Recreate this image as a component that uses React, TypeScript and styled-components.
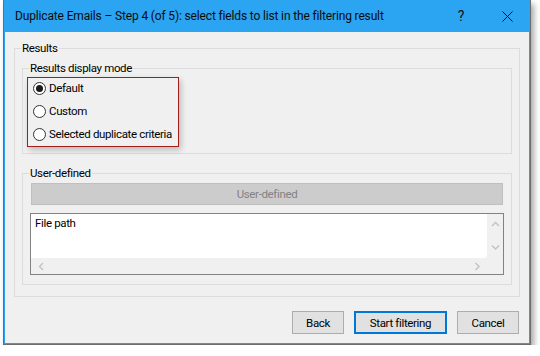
import styled, { createGlobalStyle } from "styled-components";

const modes = ["Default", "Custom", "Selected duplicate criteria"];

const Chevron = ({ dir }: { dir: "up" | "down" | "left" | "right" }) => {
    const paths: any = {
        up: "M1 5 L4.5 1.5 L8 5",
        down: "M1 1.5 L4.5 5 L8 1.5",
        left: "M5 1 L1.5 4.5 L5 8",
        right: "M1.5 1 L5 4.5 L1.5 8",
    };
    const vertical = dir === "up" || dir === "down";
    return (
        <svg width={vertical ? 9 : 7} height={vertical ? 7 : 9} viewBox={vertical ? "0 0 9 7" : "0 0 7 9"}>
            <path d={paths[dir]} fill="none" stroke="#c2c2c2" strokeWidth="1.4" />
        </svg>
    );
};

export default function App() {
    const selected = 0;

    return (
        <>
            <GlobalStyle />
            <Window>
                <TitleBar>
                    <TitleText>Duplicate Emails – Step 4 (of 5): select fields to list in the filtering result</TitleText>
                    <CaptionButton>?</CaptionButton>
                    <CaptionButton>
                        <svg width="11" height="11" viewBox="0 0 11 11">
                            <path d="M0.5 0.5 L10.5 10.5 M10.5 0.5 L0.5 10.5" stroke="#111" strokeWidth="1" />
                        </svg>
                    </CaptionButton>
                </TitleBar>
                <Content>
                    <Group $top={16} $side={9}>
                        <Caption $indent={6}>Results</Caption>
                        <GroupBody $pad="12px 7px 11px 7px">
                            <Group>
                                <Caption $indent={6}>Results display mode</Caption>
                                <GroupBody $pad="1px 4px 6px 4px">
                                    <Highlight>
                                        {modes.map((m, i) => (
                                            <RadioRow key={m}>
                                                <RadioDot $checked={i === selected} />
                                                <span>{m}</span>
                                            </RadioRow>
                                        ))}
                                    </Highlight>
                                </GroupBody>
                            </Group>
                            <Group $top={19}>
                                <Caption $indent={6}>User-defined</Caption>
                                <GroupBody $pad="2px 7px 9px 7px">
                                    <WideButton>User-defined</WideButton>
                                    <ListBox>
                                        <ListArea>File path</ListArea>
                                        <VScroll>
                                            <Chevron dir="up" />
                                            <Chevron dir="down" />
                                        </VScroll>
                                        <HScroll>
                                            <Chevron dir="left" />
                                            <Chevron dir="right" />
                                        </HScroll>
                                        <Corner />
                                    </ListBox>
                                </GroupBody>
                            </Group>
                        </GroupBody>
                    </Group>
                    <Footer>
                        <PushButton $w={52}>Back</PushButton>
                        <PushButton $w={93} $default>Start filtering</PushButton>
                        <PushButton $w={62}>Cancel</PushButton>
                    </Footer>
                </Content>
            </Window>
        </>
    );
}

const GlobalStyle = createGlobalStyle`
    body {
        margin: 0;
        background: #ffffff;
        font-family: Roboto, "Noto Sans", sans-serif;
        font-size: 11.5px;
        letter-spacing: -0.35px;
        color: #000;
    }
`

const Window = styled.div`
    margin-left: 3px;
    width: 528px;
    height: 345px;
    box-sizing: border-box;
    border: 1px solid #6d6d6d;
    border-top: none;
    background-color: #2aa1ec;
    padding: 0 1px 1px 1px;
    display: flex;
    flex-direction: column;
    box-shadow: 3px 4px 6px rgba(0, 0, 0, 0.35);
`

const TitleBar = styled.div`
    height: 32px;
    display: flex;
    align-items: center;
    background-color: #2ba4f1;
    margin: 0 -1px;
    padding-left: 11px;
`

const TitleText = styled.div`
    flex: 1;
    font-size: 12px;
    letter-spacing: -0.15px;
    color: #0b0b0b;
    white-space: nowrap;
`

const CaptionButton = styled.div`
    width: 46px;
    height: 32px;
    flex-shrink: 0;
    display: flex;
    align-items: center;
    justify-content: center;
    font-size: 14px;
    color: #111;
`

const Content = styled.div`
    flex: 1;
    background-color: #f0f0f0;
    display: flex;
    flex-direction: column;
`

const Group = styled.div<{ $top?: number; $side?: number }>`
    margin: ${(p) => p.$top || 0}px ${(p) => p.$side || 0}px 0 ${(p) => p.$side || 0}px;
    border: 1px solid #dcdcdc;
    display: flex;
    flex-direction: column;
`

const Caption = styled.div<{ $indent: number }>`
    align-self: flex-start;
    margin: -9px 0 0 ${(p) => p.$indent}px;
    padding: 0 1px;
    line-height: 16px;
    background-color: #f0f0f0;
`

const GroupBody = styled.div<{ $pad: string }>`
    padding: ${(p) => p.$pad};
    display: flex;
    flex-direction: column;
`

const Highlight = styled.div`
    width: 152px;
    height: 70px;
    box-sizing: border-box;
    border: 1px solid #a51c1c;
    box-shadow: 2px 3px 6px rgba(0, 0, 0, 0.22);
    display: flex;
    flex-direction: column;
    gap: 3px;
`

const RadioRow = styled.div`
    height: 20px;
    display: flex;
    align-items: center;
    gap: 3px;
    padding-left: 5px;
    white-space: nowrap;
`

const RadioDot = styled.div<{ $checked: boolean }>`
    width: 13px;
    height: 13px;
    flex-shrink: 0;
    box-sizing: border-box;
    border-radius: 50%;
    border: 1px solid #333;
    background-color: #fff;
    display: flex;
    align-items: center;
    justify-content: center;
    &::after {
        content: "";
        display: ${(p) => (p.$checked ? "block" : "none")};
        width: 7px;
        height: 7px;
        border-radius: 50%;
        background-color: #1a1a1a;
    }
`

const WideButton = styled.div`
    margin: 0 1px;
    height: 22px;
    box-sizing: border-box;
    background-color: #cccccc;
    border: 1px solid #bfbfbf;
    color: #838383;
    display: flex;
    align-items: center;
    justify-content: center;
`

const ListBox = styled.div`
    margin-top: 8px;
    height: 62px;
    box-sizing: border-box;
    border: 1px solid #828282;
    background-color: #f0f0f0;
    display: grid;
    grid-template-columns: 1fr 16px;
    grid-template-rows: 1fr 16px;
`

const ListArea = styled.div`
    background-color: #ffffff;
    border-bottom-right-radius: 3px;
    padding: 2px 4px;
`

const VScroll = styled.div`
    display: flex;
    flex-direction: column;
    align-items: center;
    justify-content: space-between;
    padding: 7px 0 7px;
`

const HScroll = styled.div`
    display: flex;
    align-items: center;
    justify-content: space-between;
    padding: 0 6px 0 7px;
`

const Corner = styled.div``

const Footer = styled.div`
    display: flex;
    justify-content: flex-end;
    gap: 10px;
    padding: 14px 10px 0 0;
`

const PushButton = styled.div<{ $w: number; $default?: boolean }>`
    width: ${(p) => p.$w}px;
    height: 23px;
    box-sizing: border-box;
    background-color: #e1e1e1;
    border: ${(p) => (p.$default ? "2px solid #0078d7" : "1px solid #adadad")};
    display: flex;
    align-items: center;
    justify-content: center;
`
